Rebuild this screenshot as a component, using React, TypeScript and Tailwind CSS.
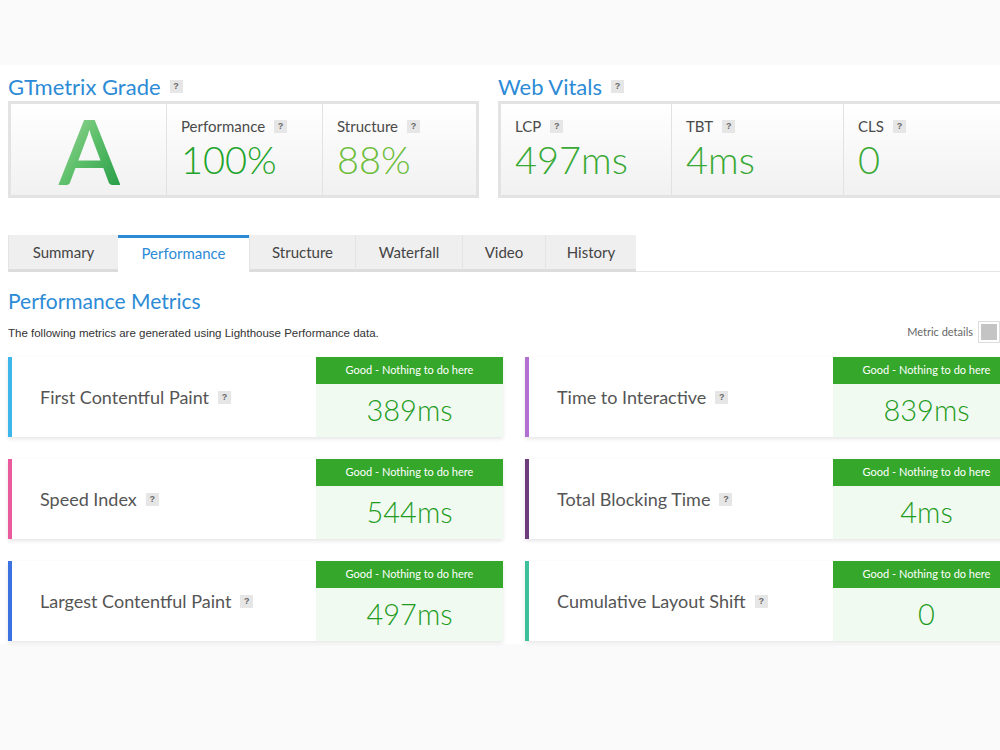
import React from "react";

const FONT = { fontFamily: "Lato, 'Open Sans', sans-serif" };

function Q({ className = "" }: { className?: string }) {
  return (
    <span
      className={
        "inline-flex items-center justify-center w-[13px] h-[13px] bg-[#e6e6e6] text-[#666] text-[9px] font-bold leading-none " +
        className
      }
      style={{ fontFamily: "'Liberation Sans', Arial, sans-serif" }}
    >
      ?
    </span>
  );
}

function StatCell({
  label,
  value,
  color,
  width,
  last,
}: {
  label: string;
  value: string;
  color: string;
  width: string;
  last?: boolean;
}) {
  return (
    <div
      className={
        "flex flex-col pl-[14px] pt-[12px] " +
        width +
        (last ? "" : " border-r border-[#e2e2e2]")
      }
    >
      <div className="flex items-center gap-[9px] text-[15px] text-[#4a4a4a] leading-[20px]">
        <span>{label}</span>
        <Q />
      </div>
      <div className={"text-[38px] leading-[46px] font-light " + color}>{value}</div>
    </div>
  );
}

const TABS = ["Summary", "Performance", "Structure", "Waterfall", "Video", "History"];
const TAB_W = ["w-[110px]", "w-[131px]", "w-[106px]", "w-[107px]", "w-[83px]", "w-[91px]"];

function MetricCard({
  label,
  value,
  bar,
}: {
  label: string;
  value: string;
  bar: string;
}) {
  return (
    <div className="flex w-[495px] h-[80px] bg-white shadow-[0_2px_4px_rgba(0,0,0,0.10)]">
      <div className={"w-[4px] " + bar} />
      <div className="flex-1 flex items-center pl-[28px] gap-[9px] text-[18px] text-[#555]">
        <span>{label}</span>
        <Q />
      </div>
      <div className="w-[187px] flex flex-col">
        <div className="h-[27px] bg-[#35a72b] text-white text-[11px] flex items-center justify-center">
          Good - Nothing to do here
        </div>
        <div className="flex-1 bg-[#f1faf1] flex items-center justify-center text-[29px] font-light text-[#1f9c1f] pb-[2px]">
          {value}
        </div>
      </div>
    </div>
  );
}

export default function App() {
  return (
    <div className="w-[1000px] h-[750px] overflow-hidden bg-[#fafafa]" style={FONT}>
      <div className="h-[65px]" />
      <div className="bg-white w-[1040px] pl-[8px] pt-[7px] pb-[3px]">
        {/* top row */}
        <div className="flex gap-[19px]">
          <div className="w-[471px] flex flex-col">
            <div className="flex items-center gap-[9px] h-[29px]">
              <span className="text-[22px] text-[#2d8bd6]">GTmetrix Grade</span>
              <Q />
            </div>
            <div className="h-[97px] border-[3px] border-[#e3e3e3] bg-gradient-to-b from-white to-[#f1f1f1] flex">
              <div className="w-[156px] border-r border-[#e2e2e2] flex items-center justify-center">
                <span className="text-[90px] leading-none font-semibold bg-gradient-to-br from-[#a8dca4] via-[#5cbf6a] to-[#1e9a45] bg-clip-text text-transparent pl-[2px]">
                  A
                </span>
              </div>
              <StatCell label="Performance" value="100%" color="text-[#1ea42a]" width="w-[156px]" />
              <StatCell label="Structure" value="88%" color="text-[#6cbd3a]" width="flex-1" last />
            </div>
          </div>
          <div className="w-[520px] flex flex-col">
            <div className="flex items-center gap-[9px] h-[29px]">
              <span className="text-[22px] text-[#2d8bd6]">Web Vitals</span>
              <Q />
            </div>
            <div className="h-[97px] border-[3px] border-[#e3e3e3] bg-gradient-to-b from-white to-[#f1f1f1] flex">
              <StatCell label="LCP" value="497ms" color="text-[#39a935]" width="w-[171px]" />
              <StatCell label="TBT" value="4ms" color="text-[#39a935]" width="w-[172px]" />
              <StatCell label="CLS" value="0" color="text-[#39a935]" width="flex-1" last />
            </div>
          </div>
        </div>

        {/* tabs */}
        <div className="mt-[37px] flex border-b border-[#e6e6e6]">
          {TABS.map((t, i) => {
            const active = i === 1;
            return (
              <div
                key={t}
                className={
                  "h-[37px] flex items-center justify-center text-[15px] -mb-px " +
                  TAB_W[i] +
                  (active
                    ? " bg-white text-[#2d8bd6] border-t-[3px] border-[#2d8bd6] pb-[3px]"
                    : " bg-[#efefef] text-[#444] border-b-[3px] border-[#dcdcdc] border-l border-l-[#e4e4e4]")
                }
              >
                {t}
              </div>
            );
          })}
        </div>

        {/* performance metrics */}
        <div className="mt-[15px] text-[21px] text-[#2d8bd6] leading-[28px]">Performance Metrics</div>
        <div className="w-[992px] flex items-center justify-between mt-[5px] h-[24px]">
          <span
            className="text-[11.5px] text-[#333] pt-[4px]"
            style={{ fontFamily: "'Liberation Sans', Arial, sans-serif" }}
          >
            The following metrics are generated using Lighthouse Performance data.
          </span>
          <div className="flex items-center gap-[5px]">
            <span className="text-[11px] text-[#666]">Metric details</span>
            <div className="w-[22px] h-[22px] border border-[#ddd] bg-white p-[2px]">
              <div className="w-full h-full bg-[#c4c4c4]" />
            </div>
          </div>
        </div>

        <div className="mt-[13px] grid grid-cols-[495px_495px] gap-x-[22px] gap-y-[22px]">
          <MetricCard label="First Contentful Paint" value="389ms" bar="bg-[#3db6ec]" />
          <MetricCard label="Time to Interactive" value="839ms" bar="bg-[#b06fd1]" />
          <MetricCard label="Speed Index" value="544ms" bar="bg-[#ea5b9d]" />
          <MetricCard label="Total Blocking Time" value="4ms" bar="bg-[#6c3c7d]" />
          <MetricCard label="Largest Contentful Paint" value="497ms" bar="bg-[#3c72e2]" />
          <MetricCard label="Cumulative Layout Shift" value="0" bar="bg-[#3dbf9b]" />
        </div>
      </div>
    </div>
  );
}
